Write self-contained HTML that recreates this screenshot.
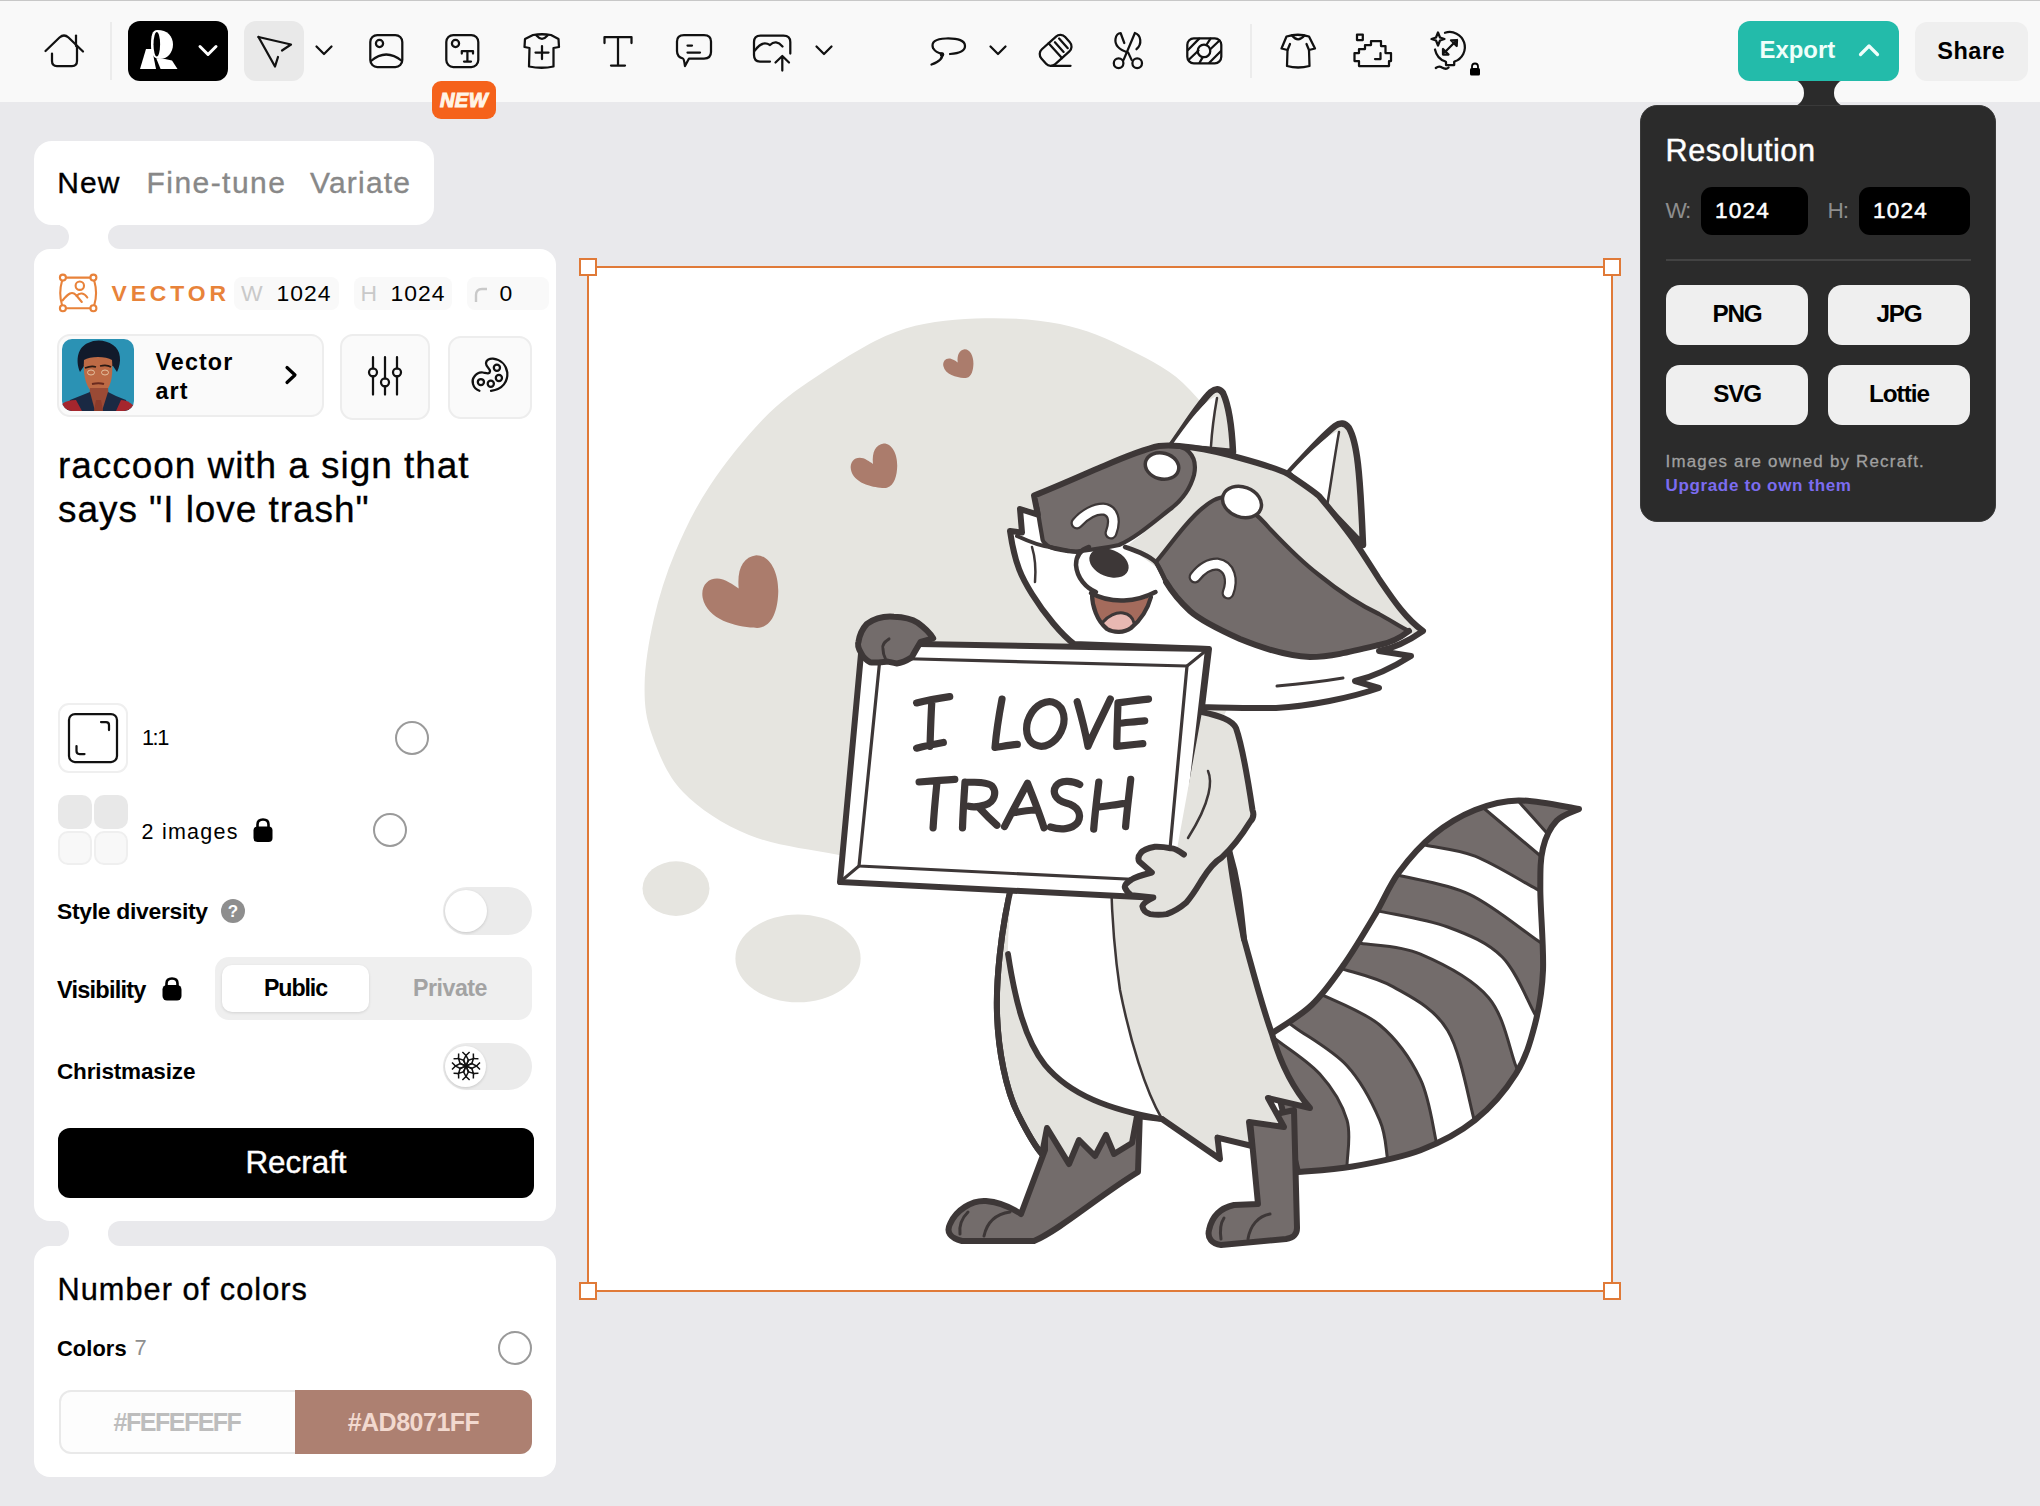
<!DOCTYPE html>
<html><head><meta charset="utf-8">
<style>
*{box-sizing:border-box;margin:0;padding:0}
html,body{width:2040px;height:1506px;overflow:hidden;background:#e9e9ec;font-family:"Liberation Sans",sans-serif;color:#000}
.a{position:absolute}
.t{position:absolute;white-space:nowrap;line-height:1}
#tb{position:absolute;left:0;top:0;width:2040px;height:102px;background:#f9f9f9;border-top:1px solid #c8c8c8}
.ic{position:absolute;overflow:visible}
.ic *{fill:none;stroke:#111;stroke-width:2.25;stroke-linecap:round;stroke-linejoin:round}
.card{position:absolute;background:#fff;border-radius:18px}
.pill{position:absolute;background:#e9e9ec;border-radius:13px}
.pbtn{position:absolute;background:#efefef;border-radius:14px}
</style></head><body>

<!-- TOOLBAR -->
<div id="tb"></div>
<!-- home -->
<svg class="ic" style="left:40px;top:28px" width="50" height="44" viewBox="40 28 50 44">
 <path d="M45.5 51 L59.5 37.5 Q64 33.5 68.5 37.5 L83 51.5"/><path d="M76 35.5 V46"/>
 <path d="M52 53.5 V61 Q52 66 57 66 H72 Q77 66 77 61 V47"/>
</svg>
<div class="a" style="left:110px;top:22px;width:2px;height:58px;background:#ececec"></div>
<!-- logo button -->
<div class="a" style="left:128px;top:21px;width:100px;height:60px;background:#000;border-radius:12px"></div>
<svg class="a" style="left:128px;top:21px" width="100" height="60" viewBox="128 21 100 60">
 <path fill="#fff" d="M140 69 L146 49 L152 49 L156 69 Z"/>
 <path fill="#fff" d="M157.5 30 C167 30 173 36 173 44.5 C173 53 167 59 160 59 C152 59 151 52 151 44.5 C151 36 152 30 157.5 30 Z"/>
 <ellipse cx="156.8" cy="44.3" rx="3.3" ry="12.2" fill="#000"/>
 <path fill="#fff" d="M156.3 58.5 L165 59 L172 60.6 L177.5 69 L160.6 69 Z"/>
 <path d="M200 46.5 L208 54.5 L216 46.5" stroke="#fff" stroke-width="3" fill="none" stroke-linecap="round" stroke-linejoin="round"/>
</svg>
<!-- select -->
<div class="a" style="left:244px;top:21px;width:60px;height:60px;background:#e9e9e9;border-radius:12px"></div>
<svg class="ic" style="left:240px;top:20px" width="100" height="60" viewBox="240 20 100 60">
 <path d="M258.5 37 L291 44.5 L282 50.5"/><path d="M258.5 37 L275 66.5 L278 57"/>
 <path d="M316.5 46.5 L324 54 L331.5 46.5"/>
</svg>
<!-- image icon -->
<svg class="ic" style="left:360px;top:25px" width="140" height="55" viewBox="360 25 140 55">
 <rect x="370.3" y="35" width="32" height="32" rx="7"/>
 <circle cx="379.5" cy="43.5" r="3.6"/>
 <path d="M371 61 Q386 48 402 61"/>
 <rect x="446.3" y="35" width="32" height="32" rx="7"/>
 <circle cx="455.5" cy="43.5" r="3.6"/>
 <path d="M461.8 53.5 V51 H473 V53.5 M467.4 51 V61.5 M464 61.5 H471" stroke-width="2.2" stroke-linecap="butt" stroke-linejoin="miter"/>
</svg>
<div class="a" style="left:432px;top:81px;width:64px;height:38px;background:#f5621b;border-radius:9px"></div>
<div class="t" style="left:436px;top:90px;font-size:20px;font-weight:700;font-style:italic;color:#fff4e6;letter-spacing:0.5px;width:56px;text-align:center;-webkit-text-stroke:1.1px #fff4e6">NEW</div>
<!-- shirt plus, T, bubble, cloud -->
<svg class="ic" style="left:515px;top:25px" width="330" height="55" viewBox="515 25 330 55">
 <path d="M533 35 Q542 33.5 551 35 L558.5 39 L559 47 L553.5 48 L553.5 66.5 Q542 69 529 66.5 L529.5 48 L524.5 47 L525 39 Z"/>
 <path d="M536.5 35.5 Q542 42 547.5 35.5"/>
 <path d="M542 46 V59 M535.5 52.5 H548.5"/>
 <path d="M604.5 43 V37 H631.5 V43 M618 37 V65.5 M611 65.5 H625" />
 <path d="M684 35 H704 Q711 35 711 41.5 V52 Q711 58.5 704 58.5 H689 L685 66 Q684 58.5 683 58.5 Q677 57 677 51 V41.5 Q677 35 684 35 Z"/>
 <path d="M687.5 45.5 H692 M687.5 52.5 H700"/>
 <path d="M770 61.5 H760 Q754 61.5 754 55 V42 Q754 35.5 760.5 35.5 H783.5 Q790.3 35.5 790.3 42 V53.5"/>
 <path d="M755 50.5 Q762 40 770 45 Q776 39 782.5 46.5"/>
 <path d="M782.3 70.5 V56 M775.5 62.5 L782.3 56 L789 62.5"/>
 <path d="M816.5 46.5 L824 54 L831.5 46.5"/>
</svg>
<!-- lasso, eraser, scissors, bg -->
<svg class="ic" style="left:920px;top:25px" width="320" height="55" viewBox="920 25 320 55">
 <path d="M933 48 Q930 39 946 38.5 Q965 38 965 46 Q965 53 950 54"/>
 <path d="M933 48 Q936 53 942 53.5 Q944 60 931.5 64.5"/><circle cx="942" cy="54.5" r="1.2"/>
 <path d="M990.5 46.5 L998 54 L1005.5 46.5"/>
 <g transform="translate(1056 50) rotate(-42)"><rect x="-16.5" y="-10" width="32" height="20" rx="6.5"/><path d="M-1 -10 V10 M4.4 -6.5 V6.5 M10 -6.5 V6.5" stroke-width="2.3"/></g>
 <path d="M1051.6 65.8 H1070.5"/>
 <circle cx="1118.6" cy="63.2" r="4.8"/><circle cx="1137.2" cy="63.2" r="4.8"/>
 <path d="M1123.6 59.9 L1134.9 33 C1141 35 1142.5 44 1136.5 49.2"/><path d="M1131.6 59.9 L1128.2 52.6 C1120 50 1114.5 46 1115.5 39 C1116 35 1118.5 33 1120.6 33 L1124.3 43"/>
 <rect x="1187.3" y="38.3" width="34" height="25" rx="6.5"/>
 <circle cx="1204" cy="50.9" r="6.3"/>
 <path d="M1188 50 L1199.2 38.6 M1189 59.5 L1198.5 50.5 M1207 44 L1210.5 38.6 M1199.5 62.8 L1202.5 57.6 M1210 49.5 L1219.5 40.5 M1209.3 62.8 L1221 51"/>
</svg>
<div class="a" style="left:1250px;top:24px;width:2px;height:54px;background:#ececec"></div>
<!-- tshirt, pixel cloud, upscale -->
<svg class="ic" style="left:1270px;top:25px" width="220" height="55" viewBox="1270 25 220 55">
 <path d="M1286.5 36.5 Q1298 33 1309 36.5 L1315 48.5 L1309 50 L1309.5 66 Q1298 69 1287 66 L1287.5 50 L1281.5 48.5 Z"/>
 <path d="M1292 35.5 Q1298 43 1304.5 35.5"/>
 <path d="M1287.5 50 L1290 44 M1309 50 L1306.5 44"/>
 <path stroke-linecap="butt" stroke-linejoin="miter" d="M1357 34.5 H1362.8 V40 H1357 Z"/>
 <path stroke-linecap="butt" stroke-linejoin="miter" d="M1371 45 V41 H1381 V46 H1385.5 V53 H1391 V61 H1389 V66 H1359 V61 H1354.5 V53 H1359 V49 H1365 V45 Z"/>
 <path stroke-linecap="butt" stroke-linejoin="miter" d="M1380.5 53 V59 H1375"/>
 <path d="M1438 32.5 L1440 37.5 L1444.5 39 L1440 40.5 L1438 45.5 L1436 40.5 L1431.5 39 L1436 37.5 Z" stroke-width="2"/>
 <path d="M1445 32.8 A15 15 0 0 1 1454.5 61.5"/>
 <path d="M1435 49.5 Q1437 59 1445.5 61.5"/>
 <path d="M1446 62 V65 H1454.2 V62" stroke-linejoin="miter"/>
 <path d="M1435.8 68 Q1439 65.5 1442 67.5 Q1446 70 1448.6 67.5" stroke-width="2"/>
 <path d="M1444.5 52.5 L1455.5 41.5"/><path d="M1451 40.3 L1457 40 L1456.7 46 Z M1443 49 L1443 54.5 L1448.5 54.5 Z" fill="#111" stroke-width="1.6"/>
</svg>
<svg class="a" style="left:1469px;top:62px" width="12" height="14" viewBox="0 0 12 14"><path d="M3 6 V4.5 Q3 1.5 6 1.5 Q9 1.5 9 4.5 V6" stroke="#000" stroke-width="1.8" fill="none"/><rect x="1" y="6" width="10" height="7.5" rx="1.5" fill="#000"/></svg>

<!-- export -->
<div class="a" style="left:1738px;top:21px;width:161px;height:60px;background:#23bbaa;border-radius:12px;z-index:3"></div>
<div class="t" style="z-index:4;left:1759.5px;top:38.4px;font-size:23.9px;font-weight:700;color:#effffb;letter-spacing:0px;">Export</div>
<svg class="a" style="z-index:4;left:1855px;top:40px" width="28" height="20" viewBox="1855 40 28 20"><path d="M1860.5 54.5 L1869 46 L1877.5 54.5" stroke="#f0fffc" stroke-width="3.2" fill="none" stroke-linecap="round" stroke-linejoin="round"/></svg>
<div class="pbtn" style="left:1915px;top:22px;width:113px;height:59px;background:#efefef;border-radius:12px"></div>
<div class="t" style="left:1937.3px;top:39.7px;font-size:23.5px;font-weight:700;color:#000;letter-spacing:0.50px;">Share</div>


<!-- LEFT PANEL -->
<div class="card" style="left:34px;top:141px;width:400px;height:84px;border-radius:18px"></div>
<div class="t" style="left:57.3px;top:168.3px;font-size:30.0px;font-weight:400;color:#000;letter-spacing:1.0px;-webkit-text-stroke:0.35px #000;">New</div>
<div class="t" style="left:146.5px;top:168.3px;font-size:30.0px;font-weight:400;color:#888;letter-spacing:1.45px;-webkit-text-stroke:0.35px #888;">Fine-tune</div>
<div class="t" style="left:310.0px;top:168.3px;font-size:30.0px;font-weight:400;color:#888;letter-spacing:1.20px;-webkit-text-stroke:0.35px #888;">Variate</div>
<!-- connector 1 -->
<div class="a" style="left:60px;top:220px;width:60px;height:34px;background:#fff"></div>
<div class="pill" style="left:0px;top:225px;width:69px;height:24px;border-radius:0 12px 12px 0"></div>
<div class="pill" style="left:108px;top:225px;width:460px;height:24px;border-radius:12px 0 0 12px"></div>

<div class="card" style="left:34px;top:249px;width:522px;height:972px;border-radius:16px"></div>
<!-- vector row -->
<svg class="a" style="left:54px;top:270px" width="48" height="46" viewBox="54 270 48 46">
 <g fill="none" stroke="#e8823a" stroke-width="2.1" stroke-linecap="round">
 <path d="M66 277.6 H90.3 M66 308.2 H90.3 M62 281 Q58.5 293 62 305 M94.3 281 Q97.8 293 94.3 305"/>
 <circle cx="62.9" cy="277.6" r="3"/><circle cx="93.4" cy="277.6" r="3"/>
 <circle cx="62.9" cy="308.2" r="3"/><circle cx="93.4" cy="308.2" r="3"/>
 <circle cx="79.8" cy="285.7" r="4.2"/>
 <path d="M62.5 300.5 Q67 295 70 293.5 Q73 292 76 295 L81.8 302"/>
 <path d="M76.6 296 Q79 293 82 293.5 Q85 294 87.3 297.5"/>
 </g>
</svg>
<div class="t" style="left:111.5px;top:282.0px;font-size:22.9px;font-weight:700;color:#e8833a;letter-spacing:3.9px;">VECTOR</div>
<div class="a" style="left:234px;top:277px;width:105px;height:33px;background:#f9f9f9;border-radius:8px"></div>
<div class="a" style="left:354px;top:277px;width:98px;height:33px;background:#f9f9f9;border-radius:8px"></div>
<div class="a" style="left:467px;top:277px;width:82px;height:33px;background:#f9f9f9;border-radius:8px"></div>
<div class="t" style="left:241.0px;top:282.0px;font-size:22.9px;font-weight:400;color:#c9c9c9;letter-spacing:0px;">W</div>
<div class="t" style="left:276.5px;top:282.0px;font-size:22.9px;font-weight:400;color:#000;letter-spacing:1.0px;">1024</div>
<div class="t" style="left:360.5px;top:282.0px;font-size:22.9px;font-weight:400;color:#c9c9c9;letter-spacing:0px;">H</div>
<div class="t" style="left:390.5px;top:282.0px;font-size:22.9px;font-weight:400;color:#000;letter-spacing:1.0px;">1024</div>
<svg class="a" style="left:472px;top:282px" width="20" height="22" viewBox="0 0 20 22"><path d="M4 20 V13 Q4 7 10 7 H15" stroke="#c9c9c9" stroke-width="2.4" fill="none"/></svg>
<div class="t" style="left:499.5px;top:282.0px;font-size:22.9px;font-weight:400;color:#000;letter-spacing:0px;">0</div>
<!-- style row -->
<div class="a" style="left:57px;top:334px;width:267px;height:83px;background:#fafafa;border:2px solid #ededed;border-radius:13px"></div>
<svg class="a" style="left:62px;top:339px" width="72" height="72" viewBox="62 339 72 72">
 <defs><clipPath id="avc"><rect x="62" y="339" width="72" height="72" rx="10"/></clipPath></defs>
 <g clip-path="url(#avc)">
 <rect x="62" y="339" width="72" height="72" fill="#2b92b4"/>
 <path d="M80 372 C75 360 78 347 88 343 C96 339 106 340 113 345 C121 350 122 362 117 372 L113 366 L84 366 Z" fill="#111a2b"/>
 <path d="M84 360 C90 356 106 356 112 360 C113 372 112 385 106 391 C102 394 95 394 91 391 C85 385 83 372 84 360 Z" fill="#bd6a45"/>
 <path d="M85 368 C90 366 93 366 96 367 M100 366 C104 365 108 365 111 367" stroke="#2a1a14" stroke-width="1.6" fill="none"/>
 <ellipse cx="91" cy="372.5" rx="3.5" ry="2.5" fill="none" stroke="#e8c9a8" stroke-width="0.9"/>
 <ellipse cx="105" cy="372.5" rx="3.5" ry="2.5" fill="none" stroke="#e8c9a8" stroke-width="0.9"/>
 <path d="M92 384 C96 383 101 383 104 384" stroke="#6b2a1e" stroke-width="2" fill="none"/>
 <path d="M90 388 L108 388 L110 411 L88 411 Z" fill="#9a4a35"/>
 <path d="M66 411 L70 400 L80 396 L90 392 L95 411 Z" fill="#1a2943"/>
 <path d="M130 411 L126 400 L116 396 L108 392 L102 411 Z" fill="#1a2943"/>
 <path d="M62 411 L62 404 C66 401 70 400 76 400 L82 411 Z" fill="#a5262d"/>
 <path d="M134 411 L134 406 C130 402 126 400 121 400 L116 411 Z" fill="#a5262d"/>
 <path d="M96 400 L101 400 L103 411 L94 411 Z" fill="#8e3b2a"/>
 </g>
</svg>
<div class="t" style="left:155.5px;top:347.6px;font-size:23.3px;font-weight:700;color:#000;letter-spacing:1.10px;line-height:29.6px">Vector<br>art</div>
<svg class="a" style="left:282px;top:362px" width="20" height="26" viewBox="0 0 20 26"><path d="M5 5.5 L13 13 L5 20.5" stroke="#000" stroke-width="3.2" fill="none" stroke-linecap="round" stroke-linejoin="round"/></svg>
<div class="a" style="left:340px;top:334px;width:90px;height:86px;background:#fafafa;border:2px solid #ededed;border-radius:13px"></div>
<div class="a" style="left:448px;top:336px;width:84px;height:83px;background:#fafafa;border:2px solid #ededed;border-radius:13px"></div>
<svg class="ic" style="left:360px;top:350px" width="50" height="50" viewBox="360 350 50 50">
 <path d="M373 357 V368.5 M373 376 V394.5 M385 357 V378.5 M385 386 V394.5 M397 357 V368.5 M397 376 V394.5" stroke-width="2.4"/>
 <circle cx="373" cy="372.3" r="4" stroke-width="2.4"/><circle cx="385" cy="382.3" r="4" stroke-width="2.4"/><circle cx="397" cy="372.3" r="4" stroke-width="2.4"/>
</svg>
<svg class="ic" style="left:465px;top:352px" width="50" height="46" viewBox="465 352 50 46">
 <path d="M479.4 390.8 C472 388 471.5 380 474 377 C476.5 373.5 480 372 483 372.5 C486 373 489.5 374.5 490 371.5 C490.5 368.5 486 367 486 363.5 C486 359.5 490 358.5 493 358.7 C500 359.5 506 364 507.3 372.5 C508 381 503 389.5 491 390.8" stroke-width="2.2"/>
 <circle cx="496.9" cy="367.7" r="3.1" stroke-width="2"/><circle cx="498.9" cy="378" r="3.1" stroke-width="2"/>
 <circle cx="490.8" cy="383.8" r="3.1" stroke-width="2"/><circle cx="480.9" cy="382.1" r="3.1" stroke-width="2"/>
</svg>
<!-- prompt -->
<div class="t" style="left:58px;top:444.2px;font-size:37px;color:#000;letter-spacing:0.95px;line-height:43.5px;-webkit-text-stroke:0.3px #000">raccoon with a sign that<br>says "I love trash"</div>
<!-- 1:1 -->
<div class="a" style="left:58px;top:703px;width:70px;height:70px;background:#fff;border:2px solid #efefef;border-radius:11px"></div>
<svg class="ic" style="left:60px;top:705px" width="66" height="66" viewBox="60 705 66 66">
 <rect x="69" y="714" width="48" height="48" rx="6" stroke-width="2.6"/>
 <path d="M101 722 H106 Q109 722 109 725 V730 M76.5 746 V751 Q76.5 754 79.5 754 H84.5" stroke-width="2.4"/>
</svg>
<div class="t" style="left:142.0px;top:727.2px;font-size:21.8px;font-weight:400;color:#000;letter-spacing:-1.5px;">1:1</div>
<div class="a" style="left:395px;top:721px;width:34px;height:34px;border:2px solid #9a9a9a;border-radius:50%"></div>
<!-- 2 images -->
<div class="a" style="left:58px;top:795px;width:34px;height:34px;background:#e8e8e8;border-radius:10px"></div>
<div class="a" style="left:94px;top:795px;width:34px;height:34px;background:#e8e8e8;border-radius:10px"></div>
<div class="a" style="left:58px;top:831px;width:34px;height:34px;background:#f8f8f8;border:2px solid #efefef;border-radius:10px"></div>
<div class="a" style="left:94px;top:831px;width:34px;height:34px;background:#f8f8f8;border:2px solid #efefef;border-radius:10px"></div>
<div class="t" style="left:141.5px;top:821.5px;font-size:21.5px;font-weight:400;color:#000;letter-spacing:1.25px;">2 images</div>
<svg class="a" style="left:252px;top:816px" width="22" height="28" viewBox="0 0 22 28"><path d="M5.5 12 V8.5 Q5.5 3.5 11 3.5 Q16.5 3.5 16.5 8.5 V12" stroke="#000" stroke-width="2.6" fill="none"/><rect x="1.5" y="10.5" width="19" height="15.5" rx="4" fill="#000"/></svg>
<div class="a" style="left:373px;top:813px;width:34px;height:34px;border:2px solid #9a9a9a;border-radius:50%"></div>
<!-- style diversity -->
<div class="t" style="left:57.0px;top:899.6px;font-size:22.9px;font-weight:700;color:#000;letter-spacing:-0.3px;">Style diversity</div>
<div class="a" style="left:221px;top:899px;width:24px;height:24px;background:#8e8e8e;border-radius:50%"></div>
<div class="t" style="left:221px;top:903px;width:24px;text-align:center;font-size:17px;font-weight:700;color:#fff">?</div>
<div class="a" style="left:443px;top:887px;width:89px;height:48px;background:#ebebeb;border-radius:24px"></div>
<div class="a" style="left:445px;top:890px;width:42px;height:42px;background:#fff;border-radius:50%;box-shadow:0 1px 3px rgba(0,0,0,0.15)"></div>
<!-- visibility -->
<div class="t" style="left:57.0px;top:978.5px;font-size:23.6px;font-weight:700;color:#000;letter-spacing:-0.80px;">Visibility</div>
<svg class="a" style="left:161px;top:975px" width="22" height="27" viewBox="0 0 22 27"><path d="M5.5 11.5 V8.5 Q5.5 3.5 11 3.5 Q16.5 3.5 16.5 8.5 V11.5" stroke="#000" stroke-width="2.6" fill="none"/><rect x="1.5" y="10" width="19" height="15.5" rx="4.5" fill="#000"/></svg>
<div class="a" style="left:215px;top:957px;width:317px;height:63px;background:#efefef;border-radius:14px"></div>
<div class="a" style="left:222px;top:965px;width:147px;height:47px;background:#fff;border-radius:10px;box-shadow:0 1px 3px rgba(0,0,0,0.12)"></div>
<div class="t" style="left:222.0px;top:976.6px;width:147px;text-align:center;font-size:23.2px;font-weight:700;color:#000;letter-spacing:-1.1px;">Public</div>
<div class="t" style="left:376.0px;top:976.6px;width:148px;text-align:center;font-size:23.2px;font-weight:700;color:#a3a3a3;letter-spacing:-0.5px;">Private</div>
<!-- christmasize -->
<div class="t" style="left:57.0px;top:1061.3px;font-size:22.5px;font-weight:700;color:#000;letter-spacing:-0.15px;">Christmasize</div>
<div class="a" style="left:443px;top:1043px;width:89px;height:47px;background:#ebebeb;border-radius:24px"></div>
<div class="a" style="left:445px;top:1046px;width:41px;height:41px;background:#fff;border-radius:50%;box-shadow:0 1px 3px rgba(0,0,0,0.15)"></div>
<svg class="a" style="left:446px;top:1046px" width="40" height="40" viewBox="-20 -20 40 40"><g stroke="#111" stroke-width="1.5" fill="none" stroke-linejoin="miter" stroke-linecap="butt"><g transform="rotate(0)"><path d="M0 -0.5 L2.6 -5.5 L0 -10.5 L-2.6 -5.5 Z"/><path d="M-3.6 -14 L0 -10.5 L3.6 -14"/></g><g transform="rotate(45)"><path d="M0 -0.5 L2.6 -5.5 L0 -10.5 L-2.6 -5.5 Z"/><path d="M-3.6 -14 L0 -10.5 L3.6 -14"/></g><g transform="rotate(90)"><path d="M0 -0.5 L2.6 -5.5 L0 -10.5 L-2.6 -5.5 Z"/><path d="M-3.6 -14 L0 -10.5 L3.6 -14"/></g><g transform="rotate(135)"><path d="M0 -0.5 L2.6 -5.5 L0 -10.5 L-2.6 -5.5 Z"/><path d="M-3.6 -14 L0 -10.5 L3.6 -14"/></g><g transform="rotate(180)"><path d="M0 -0.5 L2.6 -5.5 L0 -10.5 L-2.6 -5.5 Z"/><path d="M-3.6 -14 L0 -10.5 L3.6 -14"/></g><g transform="rotate(225)"><path d="M0 -0.5 L2.6 -5.5 L0 -10.5 L-2.6 -5.5 Z"/><path d="M-3.6 -14 L0 -10.5 L3.6 -14"/></g><g transform="rotate(270)"><path d="M0 -0.5 L2.6 -5.5 L0 -10.5 L-2.6 -5.5 Z"/><path d="M-3.6 -14 L0 -10.5 L3.6 -14"/></g><g transform="rotate(315)"><path d="M0 -0.5 L2.6 -5.5 L0 -10.5 L-2.6 -5.5 Z"/><path d="M-3.6 -14 L0 -10.5 L3.6 -14"/></g></g></svg>
<!-- recraft -->
<div class="a" style="left:58px;top:1128px;width:476px;height:70px;background:#000;border-radius:12px"></div>
<div class="t" style="left:58.0px;top:1147.1px;width:476px;text-align:center;font-size:31.4px;font-weight:400;color:#fff;letter-spacing:0px;-webkit-text-stroke:0.4px #fff;">Recraft</div>
<!-- connector 2 -->
<div class="a" style="left:60px;top:1215px;width:60px;height:36px;background:#fff"></div>
<div class="pill" style="left:0px;top:1221px;width:69px;height:25px;border-radius:0 12px 12px 0"></div>
<div class="pill" style="left:108px;top:1221px;width:460px;height:25px;border-radius:12px 0 0 12px"></div>
<div class="card" style="left:34px;top:1246px;width:522px;height:231px;border-radius:16px"></div>
<div class="t" style="left:57.5px;top:1275.4px;font-size:30.7px;font-weight:400;color:#000;letter-spacing:1.05px;-webkit-text-stroke:0.35px #000;">Number of colors</div>
<div class="t" style="left:57.0px;top:1337.9px;font-size:21.9px;font-weight:700;color:#000;letter-spacing:0.05px;">Colors</div>
<div class="t" style="left:134.5px;top:1337.1px;font-size:21.9px;font-weight:400;color:#8e8e8e;letter-spacing:0px;">7</div>
<div class="a" style="left:498px;top:1331px;width:34px;height:34px;border:2px solid #9a9a9a;border-radius:50%"></div>
<div class="a" style="left:59px;top:1390px;width:473px;height:64px;background:#fdfdfd;border:2px solid #e9e9e9;border-radius:12px"></div>
<div class="a" style="left:295px;top:1390px;width:237px;height:64px;background:#ad8071;border-radius:0 12px 12px 0"></div>
<div class="t" style="left:59.0px;top:1410.0px;width:236px;text-align:center;font-size:25.0px;font-weight:700;color:#bdbdbd;letter-spacing:-1.5px;">#FEFEFEFF</div>
<div class="t" style="left:295.0px;top:1410.0px;width:237px;text-align:center;font-size:25.0px;font-weight:700;color:#f2d9cf;letter-spacing:-0.5px;">#AD8071FF</div>

<!-- CANVAS -->
<div class="a" style="left:588px;top:267px;width:1024px;height:1024px;background:#fff"></div>
<svg class="a" style="left:588px;top:267px" width="1024" height="1024" viewBox="588 267 1024 1024"><defs><clipPath id="cl"><rect x="589" y="268" width="1022" height="1022"/></clipPath></defs><g clip-path="url(#cl)" stroke-linejoin="round" stroke-linecap="round"><path d="M1060.0 324.0 C1085.8 329.2 1108.3 339.0 1130.0 350.0 C1151.7 361.0 1171.7 370.0 1190.0 390.0 C1208.3 410.0 1228.3 431.7 1240.0 470.0 C1251.7 508.3 1275.0 561.7 1260.0 620.0 C1245.0 678.3 1201.7 778.0 1150.0 820.0 C1098.3 862.0 1001.8 866.2 950.0 872.0 C898.2 877.8 872.5 861.2 839.0 855.0 C805.5 848.8 775.0 845.5 749.0 835.0 C723.0 824.5 699.2 808.7 683.0 792.0 C666.8 775.3 658.4 752.8 652.0 735.0 C645.6 717.2 644.3 704.4 644.6 685.0 C644.9 665.6 648.8 640.8 653.9 618.7 C659.0 596.6 665.9 574.4 675.2 552.3 C684.5 530.2 695.1 508.0 709.7 485.9 C724.3 463.8 745.1 437.6 762.8 419.5 C780.5 401.4 793.8 391.6 815.9 377.0 C838.0 362.4 869.0 341.6 895.6 331.9 C922.2 322.2 947.9 319.9 975.3 318.6 C1002.7 317.3 1034.2 318.8 1060.0 324.0 Z" fill="#e6e5e0" stroke="none" stroke-width="0" />
<ellipse cx="676" cy="888.6" rx="33.5" ry="27.3" fill="#e6e5e0"/>
<ellipse cx="798" cy="958.4" rx="62.6" ry="43.9" fill="#e6e5e0"/>
<path d="M4 32 C-14 26 -42 10 -40 -14 C-38 -32 -20 -36 -8 -22 C-5 -19 -3 -17 0 -13 C4 -34 14 -44 28 -42 C42 -38 46 -18 40 2 C35 18 26 34 12 34 C9 34 6 33 4 32 Z" fill="#ab7c6c" transform="translate(959 367) rotate(-16) scale(0.37)"/>
<path d="M4 32 C-14 26 -42 10 -40 -14 C-38 -32 -20 -36 -8 -22 C-5 -19 -3 -17 0 -13 C4 -34 14 -44 28 -42 C42 -38 46 -18 40 2 C35 18 26 34 12 34 C9 34 6 33 4 32 Z" fill="#ab7c6c" transform="translate(875 471) rotate(-16) scale(0.57)"/>
<path d="M4 32 C-14 26 -42 10 -40 -14 C-38 -32 -20 -36 -8 -22 C-5 -19 -3 -17 0 -13 C4 -34 14 -44 28 -42 C42 -38 46 -18 40 2 C35 18 26 34 12 34 C9 34 6 33 4 32 Z" fill="#ab7c6c" transform="translate(742 600) rotate(-16) scale(0.93)"/>
<clipPath id="tclip"><path d="M1270.8 1034.0 C1277.6 1029.2 1299.5 1016.7 1311.7 1005.0 C1324.0 993.3 1333.9 978.8 1344.3 964.0 C1354.7 949.2 1365.2 931.2 1374.3 916.0 C1383.4 900.8 1388.8 886.1 1398.8 872.5 C1408.8 858.9 1421.3 844.8 1434.0 834.4 C1446.7 824.0 1460.9 815.7 1475.0 810.0 C1489.1 804.3 1501.2 800.6 1518.5 800.4 C1535.8 800.2 1568.9 807.6 1579.0 809.0 L1579.0 809.0 C1575.3 811.0 1562.6 814.3 1556.6 820.8 C1550.6 827.3 1545.7 836.6 1543.0 848.0 C1540.3 859.4 1540.3 868.5 1540.3 888.9 C1540.3 909.3 1543.9 947.8 1543.0 970.5 C1542.1 993.2 1539.3 1007.8 1534.8 1025.0 C1530.3 1042.2 1525.8 1058.1 1515.8 1074.0 C1505.8 1089.9 1490.9 1107.5 1475.0 1120.2 C1459.1 1132.9 1440.9 1142.5 1420.5 1150.2 C1400.1 1157.9 1372.9 1162.9 1352.5 1166.5 C1332.1 1170.1 1307.1 1171.1 1298.0 1172.0 L1280 1100 Z"/></clipPath>
<path d="M1270.8 1034.0 C1277.6 1029.2 1299.5 1016.7 1311.7 1005.0 C1324.0 993.3 1333.9 978.8 1344.3 964.0 C1354.7 949.2 1365.2 931.2 1374.3 916.0 C1383.4 900.8 1388.8 886.1 1398.8 872.5 C1408.8 858.9 1421.3 844.8 1434.0 834.4 C1446.7 824.0 1460.9 815.7 1475.0 810.0 C1489.1 804.3 1501.2 800.6 1518.5 800.4 C1535.8 800.2 1568.9 807.6 1579.0 809.0 L1579.0 809.0 C1575.3 811.0 1562.6 814.3 1556.6 820.8 C1550.6 827.3 1545.7 836.6 1543.0 848.0 C1540.3 859.4 1540.3 868.5 1540.3 888.9 C1540.3 909.3 1543.9 947.8 1543.0 970.5 C1542.1 993.2 1539.3 1007.8 1534.8 1025.0 C1530.3 1042.2 1525.8 1058.1 1515.8 1074.0 C1505.8 1089.9 1490.9 1107.5 1475.0 1120.2 C1459.1 1132.9 1440.9 1142.5 1420.5 1150.2 C1400.1 1157.9 1372.9 1162.9 1352.5 1166.5 C1332.1 1170.1 1307.1 1171.1 1298.0 1172.0 L1280 1100 Z" fill="#ffffff" stroke="none" stroke-width="0" />
<g clip-path="url(#tclip)">
<path d="M1505.9 787.3 C1508.7 790.4 1516.0 798.5 1522.6 805.9 C1529.2 813.3 1539.1 824.3 1545.7 831.7 C1552.3 839.1 1559.6 847.2 1562.4 850.3 L1620 760 L1560 760 Z" fill="#736c6b"/>
<path d="M1466.8 793.9 C1470.0 796.6 1474.1 800.1 1485.9 810.0 C1497.7 819.9 1525.8 843.6 1537.6 853.5 C1549.4 863.4 1553.5 866.9 1556.7 869.6 L1558.2 900.7 C1554.6 898.7 1550.1 896.3 1536.2 888.9 C1522.3 881.5 1493.4 863.5 1475.0 856.2 C1456.6 848.9 1438.2 848.0 1426.0 845.3 C1413.8 842.6 1405.7 840.8 1401.6 839.9 Z" fill="#736c6b"/>
<path d="M1374.7 868.8 C1378.7 869.9 1383.0 871.1 1398.8 875.3 C1414.6 879.5 1446.4 883.4 1469.5 894.3 C1492.6 905.2 1522.8 930.5 1537.6 940.6 C1552.4 950.7 1554.8 952.3 1558.3 954.7 L1547.2 1035.7 C1545.1 1032.1 1542.3 1027.1 1534.8 1014.0 C1527.3 1000.9 1516.7 971.5 1502.2 957.0 C1487.7 942.5 1468.6 934.7 1447.7 927.0 C1426.8 919.3 1392.8 914.3 1377.0 910.6 C1361.2 906.9 1356.7 905.9 1352.6 905.0 Z" fill="#736c6b"/>
<path d="M1336.0 938.8 C1340.1 939.6 1346.5 940.7 1360.6 943.3 C1374.7 945.9 1399.2 945.1 1420.5 954.2 C1441.8 963.3 1472.7 979.1 1488.6 997.7 C1504.5 1016.3 1509.7 1050.6 1515.8 1065.8 C1521.9 1081.0 1523.5 1085.1 1525.1 1089.0 L1482.1 1147.0 C1480.9 1143.0 1480.7 1142.4 1475.0 1123.0 C1469.3 1103.6 1461.3 1053.1 1447.7 1030.4 C1434.1 1007.7 1411.4 997.3 1393.3 986.9 C1375.2 976.5 1351.9 972.4 1338.9 967.8 C1325.9 963.2 1319.2 960.9 1315.3 959.5 Z" fill="#736c6b"/>
<path d="M1294.8 980.7 C1298.5 982.7 1302.9 984.9 1317.0 992.3 C1331.1 999.7 1362.5 1010.5 1379.7 1025.0 C1397.0 1039.5 1411.0 1059.5 1420.5 1079.4 C1430.0 1099.4 1433.2 1129.8 1436.9 1144.7 C1440.6 1159.6 1442.0 1164.9 1443.0 1168.9 L1392.8 1185.5 C1392.0 1181.4 1390.1 1171.9 1387.9 1161.0 C1385.7 1150.1 1386.5 1136.1 1379.7 1120.2 C1372.9 1104.3 1361.1 1081.2 1347.0 1065.8 C1332.9 1050.4 1307.3 1036.5 1295.3 1027.7 C1283.3 1018.9 1278.5 1015.3 1275.2 1012.9 Z" fill="#736c6b"/>
<path d="M1251.1 1020.4 C1254.4 1023.0 1259.3 1026.9 1270.8 1035.8 C1282.3 1044.7 1307.1 1059.9 1319.8 1074.0 C1332.5 1088.1 1342.5 1104.8 1347.0 1120.2 C1351.5 1135.6 1347.0 1154.6 1347.0 1166.5 C1347.0 1178.4 1347.0 1187.3 1347.0 1191.5 L1300 1200 L1240 1100 L1240 1010 Z" fill="#736c6b"/>
<path d="M1505.9 787.3 C1508.7 790.4 1516.0 798.5 1522.6 805.9 C1529.2 813.3 1539.1 824.3 1545.7 831.7 C1552.3 839.1 1559.6 847.2 1562.4 850.3" fill="none" stroke="#3d3737" stroke-width="3"/>
<path d="M1466.8 793.9 C1470.0 796.6 1474.1 800.1 1485.9 810.0 C1497.7 819.9 1525.8 843.6 1537.6 853.5 C1549.4 863.4 1553.5 866.9 1556.7 869.6" fill="none" stroke="#3d3737" stroke-width="3"/>
<path d="M1401.6 839.9 C1405.7 840.8 1413.8 842.6 1426.0 845.3 C1438.2 848.0 1456.6 848.9 1475.0 856.2 C1493.4 863.5 1522.3 881.5 1536.2 888.9 C1550.1 896.3 1554.6 898.7 1558.2 900.7" fill="none" stroke="#3d3737" stroke-width="3"/>
<path d="M1374.7 868.8 C1378.7 869.9 1383.0 871.1 1398.8 875.3 C1414.6 879.5 1446.4 883.4 1469.5 894.3 C1492.6 905.2 1522.8 930.5 1537.6 940.6 C1552.4 950.7 1554.8 952.3 1558.3 954.7" fill="none" stroke="#3d3737" stroke-width="3"/>
<path d="M1352.6 905.0 C1356.7 905.9 1361.2 906.9 1377.0 910.6 C1392.8 914.3 1426.8 919.3 1447.7 927.0 C1468.6 934.7 1487.7 942.5 1502.2 957.0 C1516.7 971.5 1527.3 1000.9 1534.8 1014.0 C1542.3 1027.1 1545.1 1032.1 1547.2 1035.7" fill="none" stroke="#3d3737" stroke-width="3"/>
<path d="M1336.0 938.8 C1340.1 939.6 1346.5 940.7 1360.6 943.3 C1374.7 945.9 1399.2 945.1 1420.5 954.2 C1441.8 963.3 1472.7 979.1 1488.6 997.7 C1504.5 1016.3 1509.7 1050.6 1515.8 1065.8 C1521.9 1081.0 1523.5 1085.1 1525.1 1089.0" fill="none" stroke="#3d3737" stroke-width="3"/>
<path d="M1315.3 959.5 C1319.2 960.9 1325.9 963.2 1338.9 967.8 C1351.9 972.4 1375.2 976.5 1393.3 986.9 C1411.4 997.3 1434.1 1007.7 1447.7 1030.4 C1461.3 1053.1 1469.3 1103.6 1475.0 1123.0 C1480.7 1142.4 1480.9 1143.0 1482.1 1147.0" fill="none" stroke="#3d3737" stroke-width="3"/>
<path d="M1294.8 980.7 C1298.5 982.7 1302.9 984.9 1317.0 992.3 C1331.1 999.7 1362.5 1010.5 1379.7 1025.0 C1397.0 1039.5 1411.0 1059.5 1420.5 1079.4 C1430.0 1099.4 1433.2 1129.8 1436.9 1144.7 C1440.6 1159.6 1442.0 1164.9 1443.0 1168.9" fill="none" stroke="#3d3737" stroke-width="3"/>
<path d="M1275.2 1012.9 C1278.5 1015.3 1283.3 1018.9 1295.3 1027.7 C1307.3 1036.5 1332.9 1050.4 1347.0 1065.8 C1361.1 1081.2 1372.9 1104.3 1379.7 1120.2 C1386.5 1136.1 1385.7 1150.1 1387.9 1161.0 C1390.1 1171.9 1392.0 1181.4 1392.8 1185.5" fill="none" stroke="#3d3737" stroke-width="3"/>
<path d="M1251.1 1020.4 C1254.4 1023.0 1259.3 1026.9 1270.8 1035.8 C1282.3 1044.7 1307.1 1059.9 1319.8 1074.0 C1332.5 1088.1 1342.5 1104.8 1347.0 1120.2 C1351.5 1135.6 1347.0 1154.6 1347.0 1166.5 C1347.0 1178.4 1347.0 1187.3 1347.0 1191.5" fill="none" stroke="#3d3737" stroke-width="3"/>
</g>
<path d="M1270.8 1034.0 C1277.6 1029.2 1299.5 1016.7 1311.7 1005.0 C1324.0 993.3 1333.9 978.8 1344.3 964.0 C1354.7 949.2 1365.2 931.2 1374.3 916.0 C1383.4 900.8 1388.8 886.1 1398.8 872.5 C1408.8 858.9 1421.3 844.8 1434.0 834.4 C1446.7 824.0 1460.9 815.7 1475.0 810.0 C1489.1 804.3 1501.2 800.6 1518.5 800.4 C1535.8 800.2 1568.9 807.6 1579.0 809.0 L1579.0 809.0 C1575.3 811.0 1562.6 814.3 1556.6 820.8 C1550.6 827.3 1545.7 836.6 1543.0 848.0 C1540.3 859.4 1540.3 868.5 1540.3 888.9 C1540.3 909.3 1543.9 947.8 1543.0 970.5 C1542.1 993.2 1539.3 1007.8 1534.8 1025.0 C1530.3 1042.2 1525.8 1058.1 1515.8 1074.0 C1505.8 1089.9 1490.9 1107.5 1475.0 1120.2 C1459.1 1132.9 1440.9 1142.5 1420.5 1150.2 C1400.1 1157.9 1372.9 1162.9 1352.5 1166.5 C1332.1 1170.1 1307.1 1171.1 1298.0 1172.0 L1280 1100 Z" fill="none" stroke="#3d3737" stroke-width="6" />
<path d="M1138.0 1172.0 C1130.0 1177.5 1107.3 1193.5 1090.0 1205.0 C1072.7 1216.5 1043.3 1235.0 1034.0 1241.0" fill="none" stroke="none" stroke-width="0" />
<path d="M1045 1120 L1140 1110 L1138 1172 C1100 1195 1060 1230 1034 1241 L962 1241 C950 1238 946 1232 950 1224 C956 1210 972 1200 986 1201 C1000 1202 1012 1208 1021 1214 L1045 1150 Z" fill="#736c6b" stroke="#3d3737" stroke-width="6" />
<path d="M968 1212 C962 1218 959 1226 960 1234" fill="none" stroke="#3d3737" stroke-width="3" />
<path d="M1010 1212 C996 1214 987 1222 984 1236" fill="none" stroke="#3d3737" stroke-width="3" />
<path d="M1250 1120 L1294 1110 L1297 1228 C1297 1236 1292 1238 1286 1239 L1221 1245 C1212 1244 1207 1238 1209 1230 C1212 1216 1220 1208 1234 1205 L1258 1204 Z" fill="#736c6b" stroke="#3d3737" stroke-width="6" />
<path d="M1224 1218 C1220 1224 1220 1232 1221 1239" fill="none" stroke="#3d3737" stroke-width="3" />
<path d="M1270 1214 C1258 1216 1250 1226 1248 1239" fill="none" stroke="#3d3737" stroke-width="3" />
<path d="M1013 880 C1000 930 996 985 997 1013 C998 1050 1006 1090 1018 1114 C1026 1130 1034 1145 1042 1154 L1047 1128 L1069 1164 L1079 1140 L1095 1156 L1106 1135 L1114 1154 L1132 1143 L1137 1116 L1162 1119 L1220 1159 L1217.5 1137.6 L1252 1146 L1249 1122 L1284 1127 L1268 1098 L1310 1108 C1290 1085 1278 1055 1272 1034 C1260 1000 1250 960 1244 939 C1238 910 1232 880 1229 850 L1200 720 L1040 720 Z" fill="#e4e3de" stroke="#3d3737" stroke-width="6" />
<path d="M1008 954 C1015 1000 1025 1040 1045 1065 C1070 1095 1110 1110 1162 1119 C1145 1090 1130 1040 1120 990 C1114 950 1112 920 1111 880 L1013 880 C1010 900 1008 930 1008 954 Z" fill="#ffffff" stroke="none" stroke-width="0" />
<path d="M1008 954 C1015 1000 1025 1040 1045 1065 C1070 1095 1110 1110 1162 1119" fill="none" stroke="#3d3737" stroke-width="5.8" />
<path d="M1111 880 C1112 920 1114 950 1120 990 C1130 1040 1145 1090 1162 1119" fill="none" stroke="#3d3737" stroke-width="2.5" />
<path d="M1013 880 C1000 930 996 985 997 1013 C998 1050 1006 1090 1018 1114 C1026 1130 1034 1145 1042 1154" fill="none" stroke="#3d3737" stroke-width="6" />
<path d="M1229 850 C1238 880 1240 900 1244 939" fill="none" stroke="#3d3737" stroke-width="6" />
<path d="M1171 446 C1188 422 1200 402 1211 392 Q1218 386 1223 393 C1229 406 1232 430 1233 452 Z" fill="#e4e3de" stroke="#3d3737" stroke-width="6.5" />
<path d="M1173 444 C1190 420 1205 400 1217 396 C1214 415 1212 430 1211 446 Z" fill="#ffffff" stroke="none" stroke-width="0" />
<path d="M1217 398 C1214 415 1212 430 1211 446" fill="none" stroke="#3d3737" stroke-width="2.5" />
<path d="M1288 474 C1308 452 1322 436 1335 426 Q1343 420 1349 428 C1357 442 1360 470 1363 545 L1320 500 Z" fill="#e4e3de" stroke="#3d3737" stroke-width="6.5" />
<path d="M1291 472 C1310 452 1328 434 1339 431 C1334 460 1330 490 1327 506 L1318 495 Z" fill="#ffffff" stroke="none" stroke-width="0" />
<path d="M1339 432 C1334 460 1330 490 1327 506" fill="none" stroke="#3d3737" stroke-width="2.5" />
<path d="M1034 495.5 C1058 486 1080 476 1099 468 C1120 459 1140 450 1159 446 C1175 444 1205 448 1240 458 C1262 464 1280 470 1288 474 C1300 482 1312 490 1319 496 C1335 515 1345 528 1353 539 C1362 552 1370 565 1379 579 C1392 598 1405 618 1423 631 C1410 640 1395 648 1379 651 L1411 656 C1392 668 1372 677 1355 681 L1379 688 C1350 698 1310 706 1276 708 C1250 708.5 1225 707.5 1202 707 L1209 649 L1074 644 C1062 635 1045 615 1032 594 C1022 578 1015 565 1010 531 L1022 532.6 L1020 509 L1037.8 514.7 Z" fill="#ffffff" stroke="none" stroke-width="0" />
<path d="M1187 450 C1205 448 1225 453 1240 458 C1262 464 1280 470 1288 474 C1300 482 1312 490 1319 496 C1335 515 1345 528 1353 539 C1362 552 1370 565 1379 579 C1392 598 1405 618 1420 631 L1379 645 L1310 657 L1240 639 L1179 599 L1159 569 L1127 546 C1145 532 1160 520 1169 510 C1180 500 1192 480 1195 464 Z" fill="#e4e3de" stroke="none" stroke-width="0" />
<path d="M1034 495.5 C1058 486 1080 476 1099 468 C1120 459 1140 450 1159 446 C1175 445 1185 447 1189 452 C1195 458 1196 466 1194 475 C1190 490 1180 502 1169 510 C1150 525 1135 538 1119 545 C1105 548 1090 550 1076 551.7 C1065 551 1055 549 1049.8 547 C1045 544 1043 541 1042.6 539.8 C1041 530 1039 520 1037.8 509.9 Z" fill="#736c6b" stroke="#3d3737" stroke-width="4.2" />
<path d="M1156 562 C1168 548 1180 530 1195 515 C1205 505 1215 497 1225 497 C1245 503 1258 515 1270 529 C1288 548 1303 563 1319 575 C1340 592 1362 606 1379 614 C1392 621 1400 627 1409 631 C1400 638 1390 643 1379 645 C1350 652 1330 657 1310 657 C1285 656 1262 648 1240 639 C1220 630 1200 620 1190 611 C1178 600 1172 592 1166 582 Z" fill="#736c6b" stroke="#3d3737" stroke-width="4.2" />
<path d="M1409 631 C1400 638 1390 643 1379 645 C1350 652 1330 657 1310 657 C1285 656 1262 648 1240 639 C1220 630 1200 620 1190 611 C1178 600 1172 592 1166 582" fill="none" stroke="#3d3737" stroke-width="6" />
<ellipse cx="1162" cy="466" rx="17" ry="13" transform="rotate(15 1162 466)" fill="#fff" stroke="#3d3737" stroke-width="3.5"/>
<ellipse cx="1242" cy="502" rx="20" ry="15" transform="rotate(20 1242 502)" fill="#fff" stroke="#3d3737" stroke-width="3.5"/>
<path d="M1077 523 C1085 514 1095 509 1103 509 C1113 510 1116 520 1111 533" fill="none" stroke="#3d3737" stroke-width="13" stroke-linecap="round"/>
<path d="M1077 523 C1085 514 1095 509 1103 509 C1113 510 1116 520 1111 533" fill="none" stroke="#fff" stroke-width="8.5" stroke-linecap="round"/>
<path d="M1195 577 C1202 568 1210 564 1217 564 C1230 566 1233 580 1228 593" fill="none" stroke="#3d3737" stroke-width="13" stroke-linecap="round"/>
<path d="M1195 577 C1202 568 1210 564 1217 564 C1230 566 1233 580 1228 593" fill="none" stroke="#fff" stroke-width="8.5" stroke-linecap="round"/>
<path d="M1034 495.5 C1058 486 1080 476 1099 468 C1120 459 1140 450 1159 446 C1175 444 1205 448 1240 458 C1262 464 1280 470 1288 474 C1300 482 1312 490 1319 496 C1335 515 1345 528 1353 539 C1362 552 1370 565 1379 579 C1392 598 1405 618 1423 631 C1410 640 1395 648 1379 651 L1411 656 C1392 668 1372 677 1355 681 L1379 688 C1350 698 1310 706 1276 708 C1250 708.5 1225 707.5 1202 707 L1209 649 L1074 644 C1062 635 1045 615 1032 594 C1022 578 1015 565 1010 531 L1022 532.6 L1020 509 L1037.8 514.7 Z" fill="none" stroke="#3d3737" stroke-width="6" />
<path d="M1017 536 C1030 542 1040 546 1050 547 C1060 549 1068 551 1077 552" fill="none" stroke="#3d3737" stroke-width="4" />
<path d="M1032 547 C1036 560 1036 570 1035 582" fill="none" stroke="#3d3737" stroke-width="2.5" />
<path d="M1089 547 C1080 550 1076 556 1076 565 C1077 578 1086 588 1096 592" fill="none" stroke="#3d3737" stroke-width="4.5" />
<path d="M1125 547 C1140 552 1150 556 1156 562.5 C1160 568 1163 575 1166 582 C1172 592 1180 602 1190 611" fill="none" stroke="#3d3737" stroke-width="4.5" />
<ellipse cx="1109" cy="563" rx="20.5" ry="13.5" transform="rotate(22 1109 563)" fill="#3d3737"/>
<path d="M1092 594 C1092 606 1097 621 1107 629 C1114 633 1124 633 1131 628 C1141 620 1148 608 1151 597 C1140 600 1126 601 1112 600 C1104 599 1097 597 1092 594 Z" fill="#a46b5c" stroke="none" stroke-width="0" />
<path d="M1103 622 C1108 616 1116 612 1123 613 C1129 614 1133 618 1134 623 C1130 630 1122 633 1113 631 C1108 628 1105 625 1103 622 Z" fill="#e8b8b2" stroke="none" stroke-width="0" />
<path d="M1103 622 C1108 616 1116 612 1123 613 C1129 614 1133 618 1134 623" fill="none" stroke="#3d3737" stroke-width="3" />
<path d="M1092 594 C1092 606 1097 621 1107 629 C1114 633 1124 633 1131 628 C1141 620 1148 608 1151 597" fill="none" stroke="#3d3737" stroke-width="4.2" />
<path d="M1091 593 C1100 598 1112 601 1124 600.5 C1136 600 1146 597 1155.5 592" fill="none" stroke="#3d3737" stroke-width="4.5" />
<path d="M1277 686 C1300 684 1325 681 1343 678" fill="none" stroke="#3d3737" stroke-width="3" />
<path d="M862.0 643.0 L1208.0 649.0 L1179.0 899.0 L840.0 882.0 Z" fill="#ffffff" stroke="#3d3737" stroke-width="6" />
<path d="M880.0 658.0 L1187.0 666.0 L1167.0 881.0 L859.0 866.0 Z" fill="none" stroke="#3d3737" stroke-width="3.2" />
<path d="M1208 649 L1187 666 M840 882 L859 866 M1179 899 L1167 881 M862 643 L880 658" fill="none" stroke="#3d3737" stroke-width="3" />
<path d="M916.6 702.9 C928 700 940 698 949.7 696.6 M931.9 700.4 C931 715 930.5 730 930 746.3 M916.6 748.2 C925 746 935 744 943.3 742.5 M1002 699.1 C999 715 996.5 730 995 747.5 C1002 746.5 1010 745 1017.3 744.4 M1077.2 701.7 C1081 715 1085 730 1088 746.3 C1095 730 1103 715 1110.3 699.1 M1148.5 699.1 C1138 700 1128 701.5 1118 702.9 C1117.5 717 1117 732 1116.7 746.3 C1125 745.5 1134 744.5 1142.8 743.7 M1118 723.3 C1127 722.5 1136 721.5 1144.7 720.8 M919.1 782 C931 781 943 780 954.8 779.4 M937 782 C935.5 797 934 812 933.1 827.8 M965 782 C964 797 963 812 962.5 827.8 M965 782 C975 782 988 782 992 786 C997 792 995 802 985 805 C978 807 972 807 968.8 806.2 M979 807.5 C985 814 991 820 996.9 825.3 M1004.5 826.6 C1012 812 1020 797 1027.5 783.2 C1033 797 1039 812 1044 827.8 M1014.7 812.5 C1021 811.5 1028 810.5 1035.1 810 M1079.7 784.5 C1072 780 1060 780 1056 786 C1052 792 1055 800 1066 803 C1078 806 1082 814 1078 822 C1072 830 1060 830 1050.4 827 M1098.8 782 C1097 797 1095 813 1093.7 829.1 M1130.7 779.4 C1129 795 1127 810 1125.6 826.6 M1096.3 807.5 C1105 806 1114 805 1123 803.6" fill="none" stroke="#3d3737" stroke-width="7.2" stroke-linecap="round" stroke-linejoin="round"/>
<ellipse cx="1045.3" cy="724" rx="17.5" ry="23.2" transform="rotate(26 1045.3 724)" fill="none" stroke="#3d3737" stroke-width="7.2"/>
<path d="M861.5 653.8 C858 648 857 645 858.5 641.8 C860 632 864 627 866.9 623.9 C875 618 885 616 893.8 616.7 C903 617 912 619 917.7 622.7 C925 628 930 633 933.2 638.3 L920.7 641.8 C917 648 914 653 911.7 657.4 C906 661 901 663 896.8 663.4 C893 663 890 662 887.8 661.6 C882 662 875 663 869.9 662.2 C866 660 863 657 861.5 653.8 Z" fill="#736c6b" stroke="#3d3737" stroke-width="6" />
<path d="M889 638.9 C884 642 882 646 883 649 C883 653 884 656 885.4 658.6" fill="none" stroke="#3d3737" stroke-width="3" />
<path d="M1183.9 854.5 C1178 850 1174 848 1170.6 848.2 C1165 847 1160 846.5 1154.9 846.7 C1148 848 1143 850 1140.8 852.9 C1138 856 1138 859 1139.2 861.6 L1151.8 872.5 C1142 875 1135 877 1131.4 879.6 C1126 883 1124 886 1125.1 888.2 C1127 892 1129 894 1131.4 895.3 L1153.3 897.6 C1146 901 1143 904 1142.4 906.3 C1143 910 1146 913 1150.2 914.1 C1156 915 1161 915 1166.7 914.1 C1175 911 1181 907 1186.3 902.4 C1193 895 1198 886 1202 879.6 C1208 870 1214 862 1221.6 857.6 C1232 848 1242 835 1250 822 C1254 818 1254 814 1252.5 810 C1248 780 1242 745 1236 728 C1232 720 1220 716 1202 712 L1175 860 Z" fill="#e4e3de" stroke="none" stroke-width="0" />
<path d="M1183.9 854.5 C1178 850 1174 848 1170.6 848.2 C1165 847 1160 846.5 1154.9 846.7 C1148 848 1143 850 1140.8 852.9 C1138 856 1138 859 1139.2 861.6 L1151.8 872.5 C1142 875 1135 877 1131.4 879.6 C1126 883 1124 886 1125.1 888.2 C1127 892 1129 894 1131.4 895.3 L1153.3 897.6 C1146 901 1143 904 1142.4 906.3 C1143 910 1146 913 1150.2 914.1 C1156 915 1161 915 1166.7 914.1 C1175 911 1181 907 1186.3 902.4 C1193 895 1198 886 1202 879.6 C1208 870 1214 862 1221.6 857.6 C1232 848 1242 835 1250 822 C1254 818 1254 814 1252.5 810 C1248 780 1242 745 1236 728 C1232 720 1220 716 1202 712" fill="none" stroke="#3d3737" stroke-width="6" />
<path d="M1208 771 C1212 780 1212 800 1188 838" fill="none" stroke="#3d3737" stroke-width="2.5" /></g></svg>
<div class="a" style="left:587px;top:266px;width:1026px;height:1026px;border:2px solid #e07a38"></div>
<div class="a" style="left:579px;top:258px;width:18px;height:18px;background:#fff;border:2px solid #e07a38"></div>
<div class="a" style="left:1603px;top:258px;width:18px;height:18px;background:#fff;border:2px solid #e07a38"></div>
<div class="a" style="left:579px;top:1282px;width:18px;height:18px;background:#fff;border:2px solid #e07a38"></div>
<div class="a" style="left:1603px;top:1282px;width:18px;height:18px;background:#fff;border:2px solid #e07a38"></div>

<!-- export connector & popup -->
<div class="a" style="left:1796px;top:80px;width:46px;height:28px;background:#2b2b2b"></div>
<div class="a" style="left:1776px;top:79px;width:28px;height:28px;border-radius:50%;background:linear-gradient(#f9f9f9 0,#f9f9f9 23px,#e9e9ec 23px)"></div>
<div class="a" style="left:1834px;top:79px;width:28px;height:28px;border-radius:50%;background:linear-gradient(#f9f9f9 0,#f9f9f9 23px,#e9e9ec 23px)"></div>
<div class="a" style="left:1640px;top:105px;width:356px;height:417px;background:#2b2b2b;border-radius:17px;border:1px solid #3a3a3a"></div>
<div class="t" style="left:1665.5px;top:135.7px;font-size:30.7px;font-weight:400;color:#fff;letter-spacing:0.50px;-webkit-text-stroke:0.4px #fff;">Resolution</div>
<div class="t" style="left:1665.5px;top:199.7px;font-size:22.6px;font-weight:400;color:#8e8e8e;letter-spacing:-1.5px;">W:</div>
<div class="a" style="left:1701px;top:187px;width:107px;height:48px;background:#000;border-radius:11px"></div>
<div class="t" style="left:1715.0px;top:199.7px;font-size:22.6px;font-weight:400;color:#fff;letter-spacing:1.2px;-webkit-text-stroke:0.5px #fff;">1024</div>
<div class="t" style="left:1827.5px;top:199.7px;font-size:22.6px;font-weight:400;color:#8e8e8e;letter-spacing:-1.0px;">H:</div>
<div class="a" style="left:1859px;top:187px;width:111px;height:48px;background:#000;border-radius:11px"></div>
<div class="t" style="left:1873.0px;top:199.7px;font-size:22.6px;font-weight:400;color:#fff;letter-spacing:1.2px;-webkit-text-stroke:0.5px #fff;">1024</div>
<div class="a" style="left:1666px;top:259px;width:305px;height:2px;background:#434343"></div>
<div class="pbtn" style="left:1666px;top:285px;width:142px;height:60px"></div>
<div class="pbtn" style="left:1828px;top:285px;width:142px;height:60px"></div>
<div class="pbtn" style="left:1666px;top:365px;width:142px;height:60px"></div>
<div class="pbtn" style="left:1828px;top:365px;width:142px;height:60px"></div>
<div class="t" style="left:1666.0px;top:302.4px;width:142px;text-align:center;font-size:24.3px;font-weight:700;color:#000;letter-spacing:-1.2px;">PNG</div>
<div class="t" style="left:1828.0px;top:302.4px;width:142px;text-align:center;font-size:24.3px;font-weight:700;color:#000;letter-spacing:-1.2px;">JPG</div>
<div class="t" style="left:1666.0px;top:382.4px;width:142px;text-align:center;font-size:24.3px;font-weight:700;color:#000;letter-spacing:-1.2px;">SVG</div>
<div class="t" style="left:1828.0px;top:382.4px;width:142px;text-align:center;font-size:24.3px;font-weight:700;color:#000;letter-spacing:-1.0px;">Lottie</div>
<div class="t" style="left:1665.5px;top:454.2px;font-size:16.9px;font-weight:400;color:#a0a0a0;letter-spacing:1.22px;-webkit-text-stroke:0.3px #a0a0a0;">Images are owned by Recraft.</div>
<div class="t" style="left:1665.5px;top:477.2px;font-size:17.0px;font-weight:700;color:#7b6cf0;letter-spacing:0.65px;">Upgrade to own them</div>

</body></html>
